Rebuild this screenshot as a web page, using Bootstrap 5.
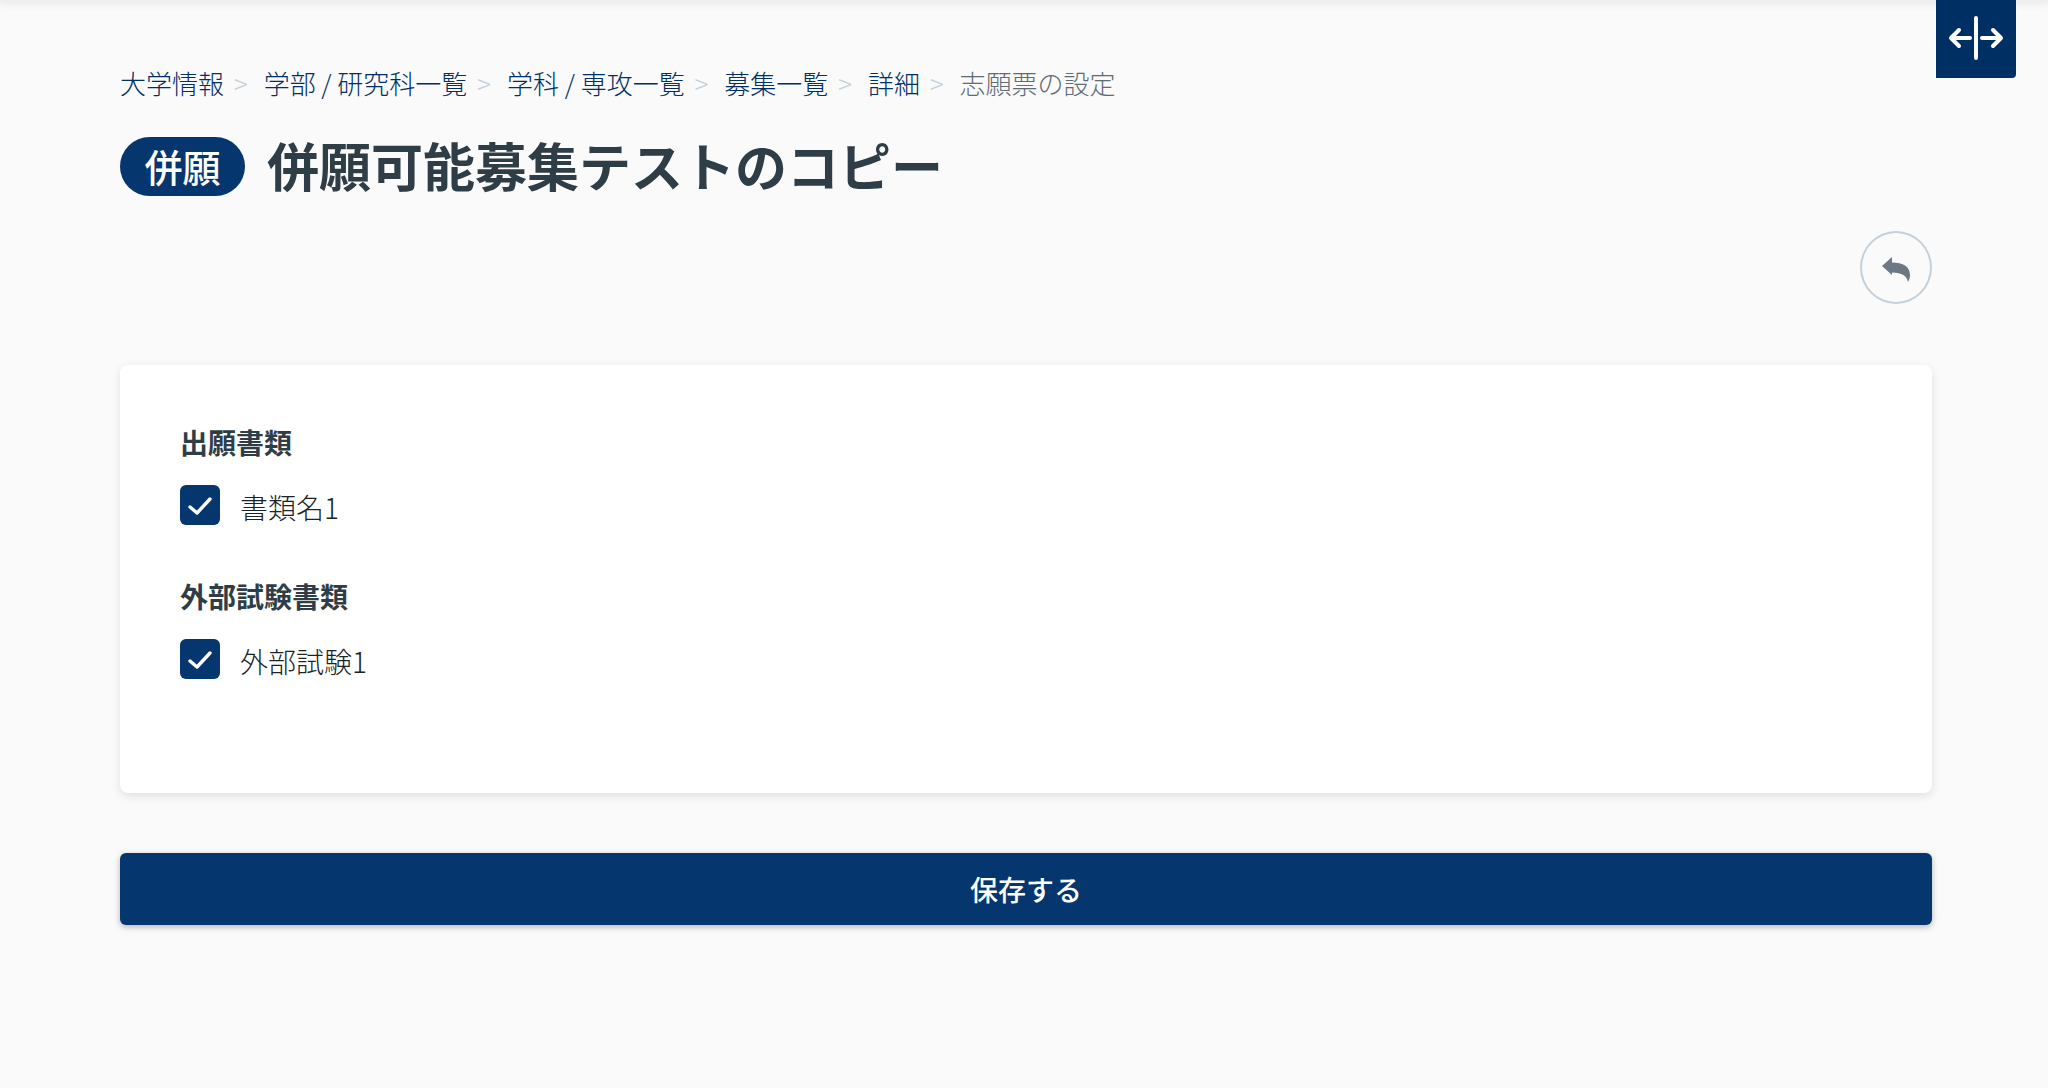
<!DOCTYPE html>
<html lang="ja">
<head>
  <meta charset="UTF-8">
  <meta name="viewport" content="width=device-width, initial-scale=1.0">
  <title>志願票の設定</title>
  <link href="https://cdn.jsdelivr.net/npm/bootstrap@5.3.3/dist/css/bootstrap.min.css" rel="stylesheet">
  <style>
    body {
      background: #fafafa;
      font-family: "Noto Sans CJK JP", "Noto Sans", sans-serif;
      color: #2f3e46;
      min-height: 1088px;
      overflow: hidden;
    }
    .top-shade {
      height: 0;
      box-shadow: 0 0 8px 2px rgba(0, 0, 0, .14);
    }
    .page-wrap { padding: 63px 116px 0 120px; }
    .toggle-btn {
      position: absolute;
      top: 0;
      left: 1936px;
      width: 80px;
      height: 78px;
      padding: 0 0 2px;
      background: #003063;
      border: 0;
      border-radius: 0 0 4px 0;
    }
    .crumbs { --bs-breadcrumb-margin-bottom: 0; font-size: 26px; font-weight: 300; line-height: 40px; }
    .crumbs .breadcrumb-item + .breadcrumb-item { padding-left: 9.7px; }
    .crumbs .breadcrumb-item + .breadcrumb-item::before {
      content: ">";
      color: #c5d0d8;
      padding-right: 16px;
    }
    .crumbs a { color: #002f66; text-decoration: none; }
    .crumbs .active { color: #5f6b76; }
    .title-row { margin-top: 34px; gap: 22px; }
    .kind-pill {
      width: 125px;
      height: 59px;
      border-radius: 30px;
      background: #06366e;
      color: #fff;
      font-size: 38px;
      font-weight: 500;
      line-height: 57px;
      text-align: center;
    }
    .page-title { font-size: 52px; font-weight: 700; line-height: 56px; padding-bottom: 3px; margin: 0; color: #2f3e46; }
    .back-btn {
      width: 72px;
      height: 73px;
      border: 2px solid #c5d0d8;
      background: transparent;
      margin-top: 35px;
    }
    .form-panel {
      margin-top: 61px;
      height: 428px;
      padding: 57px 60px;
      border: 0;
      border-radius: 8px;
      box-shadow: 0 3px 10px rgba(0, 0, 0, .11);
    }
    .group-title { font-size: 28px; font-weight: 700; line-height: 40px; margin: 0 0 23px; color: #2f3e46; }
    .check-box {
      width: 40px;
      height: 40px;
      background: #06366e;
      border-radius: 6px;
    }
    .check-label { font-size: 28px; font-weight: 300; line-height: 40px; color: #1c2328; margin-top: 2px; }
    .group-gap { margin-top: 49px; }
    .save-btn {
      margin-top: 60px;
      height: 72px;
      background: #06366e;
      border: 0;
      border-radius: 6px;
      color: #fff;
      font-size: 28px;
      font-weight: 500;
      box-shadow: 0 2px 6px rgba(0, 0, 0, .28);
    }
    .save-btn:hover { background: #06366e; color: #fff; }
  </style>
</head>
<body>
  <div class="top-shade"></div>

  <button class="toggle-btn d-flex align-items-center justify-content-center" type="button" aria-label="toggle">
    <svg width="56" height="44" viewBox="0 0 56 44" fill="none" stroke="#fff" stroke-width="4" stroke-linecap="round" stroke-linejoin="round">
      <path d="M28 2v40"/>
      <path d="M22 22H3M11 14l-8 8 8 8"/>
      <path d="M34 22h19M45 14l8 8-8 8"/>
    </svg>
  </button>

  <div class="page-wrap">
    <nav aria-label="breadcrumb">
      <ol class="breadcrumb crumbs">
        <li class="breadcrumb-item"><a href="#">大学情報</a></li>
        <li class="breadcrumb-item"><a href="#">学部 / 研究科一覧</a></li>
        <li class="breadcrumb-item"><a href="#">学科 / 専攻一覧</a></li>
        <li class="breadcrumb-item"><a href="#">募集一覧</a></li>
        <li class="breadcrumb-item"><a href="#">詳細</a></li>
        <li class="breadcrumb-item active" aria-current="page">志願票の設定</li>
      </ol>
    </nav>

    <div class="d-flex align-items-center title-row">
      <span class="kind-pill">併願</span>
      <h1 class="page-title">併願可能募集テストのコピー</h1>
    </div>

    <div class="d-flex justify-content-end">
      <button class="back-btn rounded-circle d-flex align-items-center justify-content-center p-0" type="button" aria-label="back">
        <svg class="mt-1" width="28" height="25" viewBox="0 0 28 25" fill="#6c7884">
          <path d="M0 9 10 0v5.500c11 0 18 4 18 12.500 0 3-1 5-2 7-1-6-6-9.500-16-9.500V18z"/>
        </svg>
      </button>
    </div>

    <div class="card form-panel">
      <h2 class="group-title">出願書類</h2>
      <div class="d-flex gap-3">
        <span class="check-box d-flex align-items-center justify-content-center me-1">
          <svg width="24" height="20" viewBox="0 0 24 20" fill="none" stroke="#fff" stroke-width="3.4" stroke-linecap="round" stroke-linejoin="round"><path d="M2 12l7 6L22 4"/></svg>
        </span>
        <span class="check-label">書類名1</span>
      </div>

      <h2 class="group-title group-gap">外部試験書類</h2>
      <div class="d-flex gap-3">
        <span class="check-box d-flex align-items-center justify-content-center me-1">
          <svg width="24" height="20" viewBox="0 0 24 20" fill="none" stroke="#fff" stroke-width="3.4" stroke-linecap="round" stroke-linejoin="round"><path d="M2 12l7 6L22 4"/></svg>
        </span>
        <span class="check-label">外部試験1</span>
      </div>
    </div>

    <button class="btn save-btn w-100" type="button">保存する</button>
  </div>
</body>
</html>
